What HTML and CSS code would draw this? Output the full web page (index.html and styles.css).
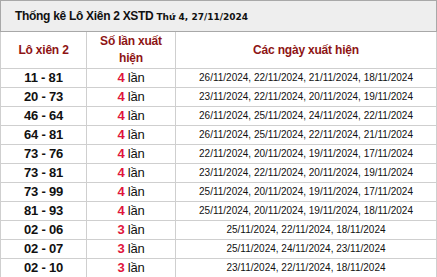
FILE: index.html
```html
<!DOCTYPE html>
<html lang="vi">
<head>
<meta charset="utf-8">
<link rel="stylesheet" href="styles.css">
</head>
<body>
<table class="stats">
  <colgroup>
    <col class="c1">
    <col class="c2">
    <col class="c3">
  </colgroup>
  <thead>
    <tr class="title-row">
      <th colspan="3" class="title">Thống kê Lô Xiên 2 XSTD <span class="sub">Thứ 4, 27/11/2024</span></th>
    </tr>
    <tr class="head-row">
      <th>Lô xiên 2</th>
      <th>Số lần xuất hiện</th>
      <th>Các ngày xuất hiện</th>
    </tr>
  </thead>
  <tbody>
    <tr><td class="pair">11 - 81</td><td class="cnt"><b>4</b> lần</td><td class="dates">26/11/2024, 22/11/2024, 21/11/2024, 18/11/2024</td></tr>
    <tr><td class="pair">20 - 73</td><td class="cnt"><b>4</b> lần</td><td class="dates">23/11/2024, 22/11/2024, 20/11/2024, 19/11/2024</td></tr>
    <tr><td class="pair">46 - 64</td><td class="cnt"><b>4</b> lần</td><td class="dates">26/11/2024, 25/11/2024, 24/11/2024, 22/11/2024</td></tr>
    <tr><td class="pair">64 - 81</td><td class="cnt"><b>4</b> lần</td><td class="dates">26/11/2024, 25/11/2024, 22/11/2024, 21/11/2024</td></tr>
    <tr><td class="pair">73 - 76</td><td class="cnt"><b>4</b> lần</td><td class="dates">22/11/2024, 20/11/2024, 19/11/2024, 17/11/2024</td></tr>
    <tr><td class="pair">73 - 81</td><td class="cnt"><b>4</b> lần</td><td class="dates">23/11/2024, 22/11/2024, 20/11/2024, 19/11/2024</td></tr>
    <tr><td class="pair">73 - 99</td><td class="cnt"><b>4</b> lần</td><td class="dates">25/11/2024, 20/11/2024, 19/11/2024, 17/11/2024</td></tr>
    <tr><td class="pair">81 - 93</td><td class="cnt"><b>4</b> lần</td><td class="dates">25/11/2024, 20/11/2024, 19/11/2024, 18/11/2024</td></tr>
    <tr><td class="pair">02 - 06</td><td class="cnt"><b>3</b> lần</td><td class="dates">25/11/2024, 22/11/2024, 18/11/2024</td></tr>
    <tr><td class="pair">02 - 07</td><td class="cnt"><b>3</b> lần</td><td class="dates">25/11/2024, 24/11/2024, 23/11/2024</td></tr>
    <tr><td class="pair">02 - 10</td><td class="cnt"><b>3</b> lần</td><td class="dates">23/11/2024, 22/11/2024, 18/11/2024</td></tr>
  </tbody>
</table>
</body>
</html>
```
FILE: styles.css
```css
html, body {
  margin: 0;
  padding: 0;
  background: #ffffff;
}
body {
  font-family: "Liberation Sans", Arial, sans-serif;
  color: #111;
}
.stats {
  width: 437px;
  border-collapse: collapse;
  table-layout: fixed;
  border: 1px solid #a8a8a8;
}
.c1 { width: 86px; }
.c2 { width: 89px; }
.stats th, .stats td {
  border: 1px solid #cfcfcf;
  padding: 0 2px;
  text-align: center;
}
.stats .title-row th {
  border-color: #a8a8a8;
}
.stats .title {
  height: 30px;
  background: #eeeeee;
  text-align: left;
  padding: 0 0 0 14px;
  font-size: 12px;
  letter-spacing: -0.3px;
  font-weight: bold;
  color: #111;
}
.sub {
  font-family: "DejaVu Sans", Verdana, sans-serif;
  font-size: 9px;
  letter-spacing: 0;
}
.head-row th {
  height: 36px;
  color: #8e1414;
  font-size: 12px;
  font-weight: bold;
  line-height: 17px;
  letter-spacing: -0.2px;
}
.stats td {
  height: 18px;
  line-height: 16px;
}
.pair {
  font-size: 13px;
  font-weight: bold;
  letter-spacing: -0.2px;
}
.cnt {
  font-size: 13px;
  letter-spacing: -0.2px;
}
.cnt b {
  color: #e0143c;
}
.dates {
  font-size: 10px;
  color: #111;
}
```
